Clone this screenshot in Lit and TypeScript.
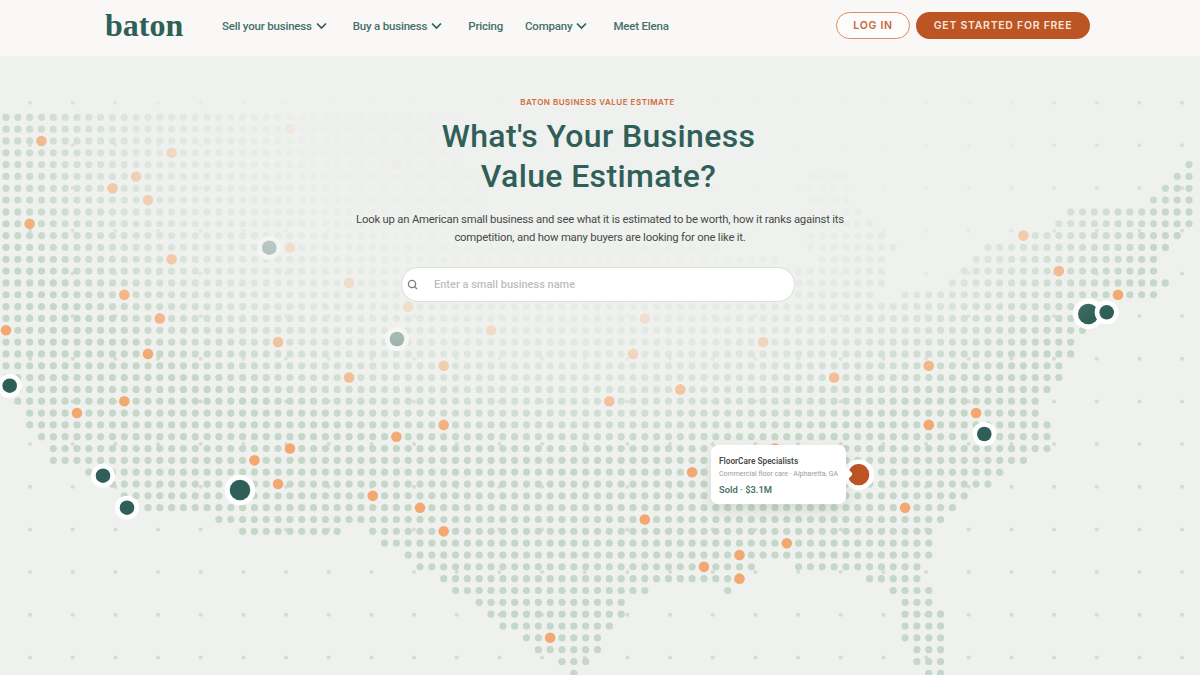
import { LitElement, html, css, svg } from "lit";
import { customElement } from "lit/decorators.js";

const P = 11.83;
const gx = (c: number) => 6 + P * c;
const gy = (j: number) => 117.3 + P * j;

const ROWS: number[][][] = [
  [[0, 38]], [[0, 38]], [[0, 38]], [[0, 38]], [[0, 38], [100, 100]],
  [[0, 40], [68, 71], [99, 100]], [[0, 40], [67, 71], [98, 100]], [[0, 40], [68, 71], [97, 100]],
  [[0, 40], [68, 72], [90, 100]], [[0, 42], [68, 73], [89, 100]],
  [[0, 44], [68, 74], [86, 99]], [[0, 60], [68, 75], [83, 98]],
  [[0, 65], [69, 74], [82, 97]], [[0, 74], [81, 97]], [[0, 74], [80, 98]],
  [[0, 73], [76, 97]], [[0, 90]], [[0, 90]], [[0, 91]], [[0, 90]], [[0, 90]],
  [[0, 89]], [[0, 89]], [[1, 88]], [[1, 87]], [[2, 87]], [[2, 88]], [[3, 88]],
  [[4, 88]], [[4, 86]], [[7, 84]], [[9, 83]], [[10, 81]], [[12, 80]], [[18, 79]],
  [[20, 28], [31, 78]], [[32, 78]], [[34, 78]], [[35, 63], [67, 77]],
  [[37, 62], [73, 77]], [[38, 54], [61, 61], [75, 78]], [[40, 52], [76, 78]],
  [[41, 52], [76, 79]], [[42, 51], [76, 79]], [[44, 50], [76, 79]],
  [[45, 50], [77, 79]], [[47, 49], [77, 79]], [[48, 48], [78, 79]],
];

const ORANGE: [number, number][] = [
  [3, 2], [14, 3], [11, 5], [9, 6], [12, 7], [2, 9], [14, 12], [10, 15], [13, 17], [0, 18],
  [23, 19], [12, 20], [29, 22], [37, 21], [6, 25], [10, 24], [33, 27], [37, 26], [24, 28],
  [21, 29], [23, 31], [31, 32], [35, 33], [37, 35], [51, 24], [57, 23], [53, 20], [54, 17],
  [41, 18], [34, 16], [29, 14], [24, 11], [64, 19], [70, 22], [78, 21], [86, 10], [89, 13],
  [94, 15], [82, 25], [78, 26], [58, 30], [54, 34], [66, 36], [62, 37], [59, 38], [62, 39],
  [76, 33], [46, 44], [24, 1], [33, 4], [65, 28],
];

const PINS: [number, number, number, number][] = [
  [9.7, 385.7, 7.3, 12], [103, 475.7, 7.3, 12], [127, 507.7, 7.3, 12], [240, 490, 10.3, 15.3],
  [269.3, 247.7, 7.3, 12], [397, 339, 7.3, 12], [1088.3, 314, 10.3, 15.3], [1106.7, 312.3, 7.3, 12],
  [984.3, 434, 7.3, 12],
];

function smallDots() {
  const out = [];
  for (let k = 0; k < 14; k++) {
    for (let i = 0; i < 28; i++) {
      out.push(svg`<circle class="tiny" cx=${30 + 42.67 * i} cy=${102.7 + 42.67 * k} r="2"></circle>`);
    }
  }
  return out;
}

function mapDots() {
  const out = [];
  ROWS.forEach((spans, j) => {
    for (const [a, b] of spans) {
      for (let c = a; c <= b; c++) {
        out.push(svg`<circle class="dot" cx=${gx(c)} cy=${gy(j)} r="3.6"></circle>`);
      }
    }
  });
  return out;
}

@customElement("app-root")
export class AppRoot extends LitElement {
  static styles = css`
    :host {
      display: block;
      width: 1200px;
      height: 675px;
      overflow: hidden;
      font-family: "Roboto", "Liberation Sans", sans-serif;
      background: #eff1ee;
    }
    header {
      height: 56px;
      background: #f9f8f6;
      display: flex;
      align-items: center;
      padding: 0 110px 5px 105px;
      box-sizing: border-box;
    }
    .logo {
      font-family: "Liberation Serif", serif;
      font-weight: 700;
      font-size: 32px;
      line-height: 1;
      color: #2f5f58;
      margin-top: -1px;
      width: 117px;
    }
    nav {
      display: flex;
      align-items: center;
      gap: 22px;
      flex: 1;
    }
    .link {
      display: flex;
      align-items: center;
      gap: 4px;
      font-size: 11.5px;
      font-weight: 500;
      letter-spacing: -0.2px;
      color: #44706a;
      white-space: nowrap;
    }
    .link svg {
      width: 11px;
      height: 8px;
      margin-right: 4px;
      fill: none;
      stroke: #2f5f58;
      stroke-width: 1.7;
    }
    .buttons {
      display: flex;
      gap: 6px;
      font-family: "Inter", "Liberation Sans", sans-serif;
    }
    .btn {
      height: 27px;
      border-radius: 14px;
      box-sizing: border-box;
      display: flex;
      align-items: center;
      justify-content: center;
      font-size: 10.5px;
      font-weight: 600;
      letter-spacing: 0.72px;
      white-space: nowrap;
    }
    .login {
      width: 74px;
      background: #fdfcfb;
      border: 1.5px solid #df8a5f;
      color: #c4673a;
    }
    .start {
      width: 174px;
      background: #bd5423;
      color: #f8e6db;
    }
    .hero {
      position: relative;
      height: 619px;
      overflow: hidden;
    }
    .map {
      position: absolute;
      left: 0;
      top: -56px;
      width: 1200px;
      height: 675px;
    }
    .map .tiny {
      fill: #d7d9d6;
    }
    .map .dot {
      fill: #c5d7c8;
    }
    .map .orange {
      fill: #f3a871;
    }
    .map .ring {
      fill: #ffffff;
    }
    .map .pin {
      fill: #2f5f58;
    }
    .map .sold {
      fill: #bd5423;
    }
    .fade {
      position: absolute;
      inset: 0;
      background:
        radial-gradient(ellipse 620px 330px at 590px 70px,
          rgba(239, 241, 238, 0.97) 0%,
          rgba(239, 241, 238, 0.92) 45%,
          rgba(239, 241, 238, 0.6) 72%,
          rgba(239, 241, 238, 0) 100%);
    }
    .content {
      position: relative;
      display: flex;
      flex-direction: column;
      align-items: center;
      text-align: center;
      padding-top: 40px;
    }
    .eyebrow {
      font-family: "Inter", "Liberation Sans", sans-serif;
      font-size: 8px;
      line-height: 12px;
      font-weight: 600;
      letter-spacing: 0.5px;
      color: #cf6a3b;
      margin-right: 5px;
    }
    h1 {
      margin: 8px 3px 0 0;
      font-size: 32px;
      line-height: 40px;
      font-weight: 500;
      letter-spacing: 0.35px;
      color: #2f5f58;
    }
    .lead {
      margin: 15px 0 0;
      font-size: 11.3px;
      line-height: 18px;
      letter-spacing: -0.2px;
      color: #464a48;
      width: 500px;
    }
    .search {
      margin: 20px 4px 0 0;
      width: 394px;
      height: 35px;
      box-sizing: border-box;
      background: #fff;
      border: 1px solid #dcdfd9;
      border-radius: 18px;
      display: flex;
      align-items: center;
      padding-left: 5px;
      text-align: left;
    }
    .search svg {
      width: 11px;
      height: 11px;
      margin-right: 16px;
      margin-top: -1px;
      fill: none;
      stroke: #7b7e7b;
      stroke-width: 1.3;
    }
    .search span {
      font-size: 11px;
      font-weight: 500;
      color: #bdbfbc;
    }
    .card {
      position: absolute;
      left: 711px;
      top: 389px;
      width: 135px;
      height: 59px;
      box-sizing: border-box;
      padding: 10px 8px;
      background: #fff;
      border-radius: 7px;
      box-shadow: 0 6px 16px rgba(40, 60, 50, 0.13);
      text-align: left;
    }
    .card::after {
      content: "";
      position: absolute;
      right: -5px;
      top: 24px;
      width: 10px;
      height: 10px;
      background: #fff;
      border-radius: 2px;
      transform: rotate(45deg);
    }
    .title {
      font-size: 8.3px;
      line-height: 12px;
      font-weight: 600;
      color: #4a4a4a;
      white-space: nowrap;
    }
    .sub {
      margin-top: 3px;
      font-size: 7px;
      line-height: 9px;
      color: #9a9c9a;
      white-space: nowrap;
    }
    .sold-line {
      margin-top: 4px;
      font-size: 9.4px;
      line-height: 13px;
      font-weight: 600;
      color: #4a7469;
      white-space: nowrap;
    }
  `;

  private chevron() {
    return html`<svg viewBox="0 0 11 8"><polyline points="1,1.5 5.5,6 10,1.5"></polyline></svg>`;
  }

  render() {
    return html`
      <header>
        <div class="logo">baton</div>
        <nav>
          <span class="link">Sell your business ${this.chevron()}</span>
          <span class="link">Buy a business ${this.chevron()}</span>
          <span class="link">Pricing</span>
          <span class="link">Company ${this.chevron()}</span>
          <span class="link">Meet Elena</span>
        </nav>
        <div class="buttons">
          <div class="btn login">LOG IN</div>
          <div class="btn start">GET STARTED FOR FREE</div>
        </div>
      </header>
      <section class="hero">
        <svg class="map" viewBox="0 0 1200 675">
          ${smallDots()} ${mapDots()}
          ${ORANGE.map(([c, j]) => svg`<circle class="orange" cx=${gx(c)} cy=${gy(j)} r="5.3"></circle>`)}
          ${PINS.map(
            ([x, y, r, R]) => svg`<circle class="ring" cx=${x} cy=${y} r=${R}></circle><circle class="pin" cx=${x} cy=${y} r=${r}></circle>`,
          )}
          <circle class="ring" cx="858.7" cy="474.7" r="15.3"></circle>
          <circle class="sold" cx="858.7" cy="474.7" r="10.6"></circle>
        </svg>
        <div class="fade"></div>
        <div class="content">
          <div class="eyebrow">BATON BUSINESS VALUE ESTIMATE</div>
          <h1>What's Your Business<br />Value Estimate?</h1>
          <p class="lead">
            Look up an American small business and see what it is estimated to be worth, how it ranks against its
            competition, and how many buyers are looking for one like it.
          </p>
          <div class="search">
            <svg viewBox="0 0 11 11"><circle cx="5" cy="5" r="3.6"></circle><line x1="7.7" y1="7.7" x2="10" y2="10"></line></svg>
            <span>Enter a small business name</span>
          </div>
        </div>
        <div class="card">
          <div class="title">FloorCare Specialists</div>
          <div class="sub">Commercial floor care · Alpharetta, GA</div>
          <div class="sold-line">Sold · $3.1M</div>
        </div>
      </section>
    `;
  }
}
